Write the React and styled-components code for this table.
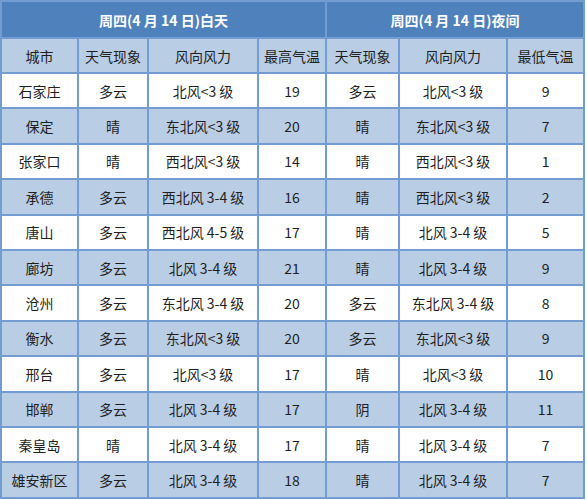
import React from "react";
import styled, { createGlobalStyle } from "styled-components";

const Global = createGlobalStyle`
  html, body { margin: 0; padding: 0; background: #fff; }
  body { font-family: "Noto Sans CJK SC", "Noto Sans", sans-serif; }
`;

const Table = styled.table`
  border-collapse: collapse;
  table-layout: fixed;
  width: 583px;
  margin: 0;
  color: #1f1f1f;
  font-size: 14px;
`;

const Cell = styled.td`
  border: 2px solid #739cd2;
  text-align: center;
  vertical-align: middle;
  padding: 0;
  height: 33.4px;
  line-height: 20px;
  white-space: nowrap;
  background: ${(p) => (p.$alt ? "#b9cde5" : "#ffffff")};
`;

const TitleCell = styled.th`
  border: 2px solid #739cd2;
  background: #4f81bd;
  color: #ffffff;
  font-weight: bold;
  font-size: 14px;
  height: 35px;
  padding: 0;
  text-align: center;
`;

const HeadCell = styled.th`
  border: 2px solid #739cd2;
  background: #b9cde5;
  font-weight: normal;
  font-size: 14px;
  height: 33px;
  padding: 0;
  text-align: center;
  color: #1f1f1f;
`;

const widths = [77, 70, 110, 68, 73, 108, 77];
const heads = ["城市", "天气现象", "风向风力", "最高气温", "天气现象", "风向风力", "最低气温"];

const rows = [
  ["石家庄", "多云", "北风<3 级", "19", "多云", "北风<3 级", "9"],
  ["保定", "晴", "东北风<3 级", "20", "晴", "东北风<3 级", "7"],
  ["张家口", "晴", "西北风<3 级", "14", "晴", "西北风<3 级", "1"],
  ["承德", "多云", "西北风 3-4 级", "16", "晴", "西北风<3 级", "2"],
  ["唐山", "多云", "西北风 4-5 级", "17", "晴", "北风 3-4 级", "5"],
  ["廊坊", "多云", "北风 3-4 级", "21", "晴", "北风 3-4 级", "9"],
  ["沧州", "多云", "东北风 3-4 级", "20", "多云", "东北风 3-4 级", "8"],
  ["衡水", "多云", "东北风<3 级", "20", "多云", "东北风<3 级", "9"],
  ["邢台", "多云", "北风<3 级", "17", "晴", "北风<3 级", "10"],
  ["邯郸", "多云", "北风 3-4 级", "17", "阴", "北风 3-4 级", "11"],
  ["秦皇岛", "晴", "北风 3-4 级", "17", "晴", "北风 3-4 级", "7"],
  ["雄安新区", "多云", "北风 3-4 级", "18", "晴", "北风 3-4 级", "7"],
];

export default function App() {
  return (
    <>
      <Global />
      <Table>
        <colgroup>
          {widths.map((w, i) => (
            <col key={i} style={{ width: w }} />
          ))}
        </colgroup>
        <thead>
          <tr>
            <TitleCell colSpan={4}>周四(4 月 14 日)白天</TitleCell>
            <TitleCell colSpan={3}>周四(4 月 14 日)夜间</TitleCell>
          </tr>
          <tr>
            {heads.map((h, i) => (
              <HeadCell key={i}>{h}</HeadCell>
            ))}
          </tr>
        </thead>
        <tbody>
          {rows.map((r, i) => (
            <tr key={i}>
              {r.map((c, j) => (
                <Cell key={j} $alt={i % 2 === 1}>
                  {c}
                </Cell>
              ))}
            </tr>
          ))}
        </tbody>
      </Table>
    </>
  );
}
